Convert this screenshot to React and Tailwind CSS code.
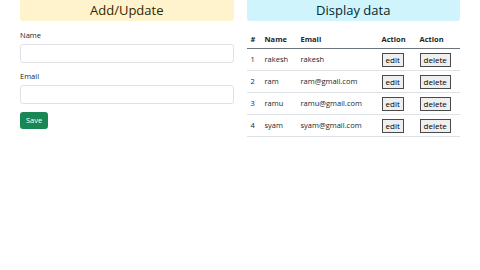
const users = [
  { id: 1, name: 'rakesh', email: 'rakesh' },
  { id: 2, name: 'ram', email: 'ram@gmail.com' },
  { id: 3, name: 'ramu', email: 'ramu@gmail.com' },
  { id: 4, name: 'syam', email: 'syam@gmail.com' },
]

function App() {
  return (
    <div className="min-h-[270px] w-[480px] bg-white font-['Open_Sans',sans-serif] text-[#212529]">
      <div className="flex gap-[13px] px-[20px]">
        {/* form column */}
        <div className="w-[214px]">
          <h2 className="flex h-[21px] items-center justify-center rounded-b-[3px] bg-[#fff3cd] pb-[1px] text-[13px] leading-none text-[#332701]">
            Add/Update
          </h2>
          <form className="mt-[9px]" onSubmit={(e) => e.preventDefault()}>
            <label className="block text-[7.5px] leading-[11px]">Name</label>
            <input className="mt-[3px] block h-[19px] w-full rounded-[3px] border border-[#dee2e6]" />
            <label className="mt-[8px] block text-[7.5px] leading-[11px]">Email</label>
            <input className="mt-[3px] block h-[19px] w-full rounded-[3px] border border-[#dee2e6]" />
            <button
              type="submit"
              className="mt-[8px] flex h-[17px] w-[28px] items-center justify-center rounded-[3px] bg-[#198754] text-[7.5px] text-white"
            >
              Save
            </button>
          </form>
        </div>

        {/* table column */}
        <div className="w-[214px]">
          <h2 className="flex h-[21px] items-center justify-center rounded-b-[3px] bg-[#cff4fc] pb-[1px] text-[13px] leading-none text-[#032830]">
            Display data
          </h2>
          <table className="mt-[10px] w-full border-collapse text-left text-[7.5px]">
            <thead>
              <tr className="border-b border-[#6c757d] font-bold">
                <th className="w-[14px] px-[4px] py-[3px] leading-[11px]">#</th>
                <th className="w-[36px] px-[4px] py-[3px]">Name</th>
                <th className="w-[81px] px-[4px] py-[3px]">Email</th>
                <th className="w-[38px] px-[4px] py-[3px]">Action</th>
                <th className="px-[4px] py-[3px]">Action</th>
              </tr>
            </thead>
            <tbody>
              {users.map((user) => (
                <tr key={user.id} className="h-[22px] border-b border-[#dee2e6]">
                  <td className="px-[4px]">{user.id}</td>
                  <td className="px-[4px]">{user.name}</td>
                  <td className="px-[4px]">{user.email}</td>
                  <td className="px-[4px]">
                    <button className="flex h-[14px] items-center border border-[#4a4a4a] bg-[#efefef] px-[3px] text-[8px] text-black">
                      edit
                    </button>
                  </td>
                  <td className="px-[4px]">
                    <button className="flex h-[14px] items-center border border-[#4a4a4a] bg-[#efefef] px-[3px] text-[8px] text-black">
                      delete
                    </button>
                  </td>
                </tr>
              ))}
            </tbody>
          </table>
        </div>
      </div>
    </div>
  )
}

export default App
